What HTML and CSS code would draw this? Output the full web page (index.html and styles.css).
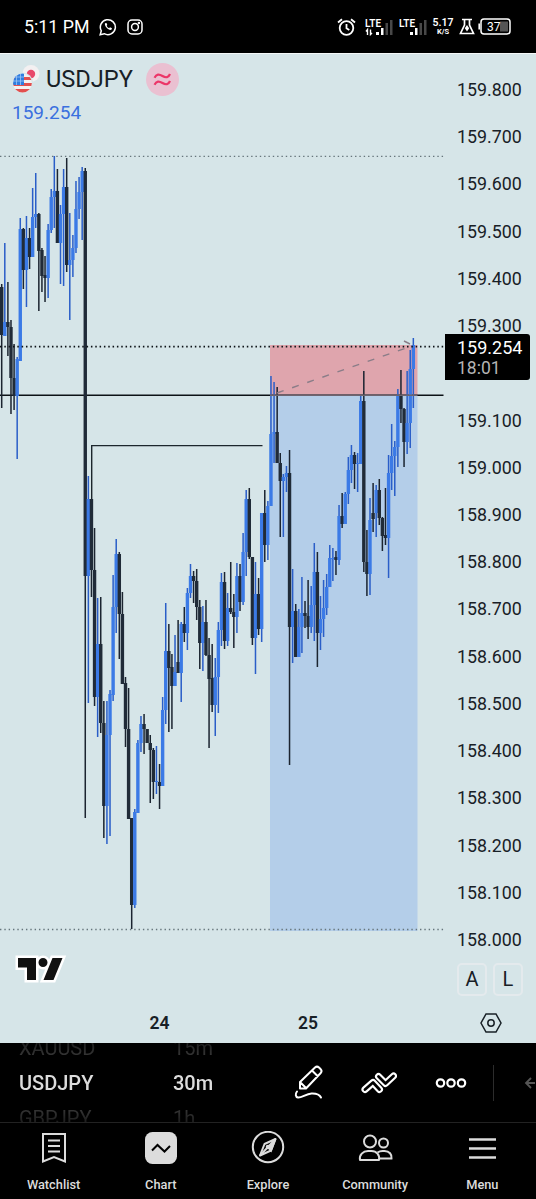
FILE: index.html
```
<!DOCTYPE html>
<html lang="en">
<head>
    <meta charset="UTF-8">
    <meta name="viewport" content="width=device-width, initial-scale=1.0">
    <title>USDJPY 159.254</title>
    <link rel="stylesheet" href="styles.css">
</head>
<body>
    <div class="status-bar">
        <span class="clock">5:11 PM</span>
        <svg class="whatsapp" width="18" height="18" viewBox="0 0 18 18" fill="none" stroke="#fff" stroke-width="1.5">
            <path d="M1.2 16.8l1.1-4A7.5 7.5 0 1 1 5.2 15.700z"/>
            <path d="M6 5.200c-1 2.500 3.600 7.500 6.400 6.600l.6-1.500-2-1-.9 1c-1.200-.5-2-1.400-2.500-2.500l.7-.8-.8-2z" fill="#fff" stroke="none"/>
        </svg>
        <svg class="instagram" width="16" height="16" viewBox="0 0 16 16" fill="none" stroke="#fff" stroke-width="1.5">
            <rect x="1" y="1" width="14" height="14" rx="4"/>
            <circle cx="8" cy="8" r="3.400"/>
            <circle cx="11.900" cy="4.100" r=".5"/>
        </svg>
        <div class="status-right">
            <svg class="alarm" width="19" height="18" viewBox="0 0 19 18" fill="none" stroke="#fff" stroke-width="1.800">
                <circle cx="9.500" cy="10" r="6.800"/>
                <path d="M1 4.500L5 1.200M18 4.500L14 1.200M9.500 6v4.300l2.800 1.700"/>
            </svg>
            <svg class="lte" width="29" height="18" viewBox="0 0 29 18">
                <text x="0" y="8.500">LTE</text>
                <path d="M2.500 17v-5.500l-1.500 2M5.500 11.500v5l1.500-1.500" fill="none" stroke="#fff" stroke-width="1.400"/>
                <path d="M11 14h3v3h-3zM16 10h2.500v7H16z" fill="#fff"/>
                <path d="M20.500 5H23v12h-2.500zM25 2h2.500v15H25z" fill="#484848"/>
            </svg>
            <svg class="lte second" width="29" height="18" viewBox="0 0 29 18">
                <text x="0" y="8.500">LTE</text>
                <path d="M11 14h3v3h-3zM16 10h2.500v7H16z" fill="#fff"/>
                <path d="M20.500 5H23v12h-2.500zM25 2h2.500v15H25z" fill="#484848"/>
            </svg>
            <div class="speed"><b>5.17</b><small>K/S</small></div>
            <svg class="flask" width="16" height="17" viewBox="0 0 16 17" fill="none" stroke="#fff" stroke-width="1.700">
                <path d="M3 1.500h10M5.500 2v5L1.500 15.500h13L10.500 7V2"/>
                <path d="M8 7l2.200 3.300L8 13.500l-2.200-3.200z" fill="#fff" stroke="none"/>
            </svg>
            <svg class="battery" width="33" height="17" viewBox="0 0 33 17">
                <path d="M1.200 5.500v6" stroke="#fff" stroke-width="1.600"/>
                <rect x="3" y="1" width="29" height="15" rx="3" fill="none" stroke="#fff" stroke-width="1.500"/>
                <path d="M22 3.500h8v10h-8z" fill="#555"/>
                <text x="9" y="12.700">37</text>
            </svg>
        </div>
    </div>

    <div class="chart">
        <div class="plot">
            <svg id="candles" width="445" height="951" viewBox="0 54 445 951"></svg>
            <div class="legend">
                <div class="symbol">
                    <svg width="28" height="28" viewBox="0 0 28 28">
                        <circle cx="19" cy="8.500" r="8.500" fill="#f3f0f1"/>
                        <circle cx="19" cy="9" r="4.200" fill="#e8486a"/>
                        <circle cx="10.500" cy="18" r="10.500" fill="#d6e5e8"/>
                        <clipPath id="flag"><circle cx="10.500" cy="18" r="9.400"/></clipPath>
                        <g clip-path="url(#flag)">
                            <path d="M0 8h21v20H0z" fill="#f4f1f1"/>
                            <path d="M0 12h21v3H0zM0 18h21v3H0zM0 24h21v4H0z" fill="#e2504f"/>
                            <path d="M0 8h12v12H0z" fill="#2f7de0"/>
                            <path d="M0 12h12M0 16h12M4.500 8v12M8.500 8v12" stroke="#9cc5f5" stroke-width=".8"/>
                        </g>
                    </svg>
                    <span class="symbol-name">USDJPY</span>
                    <svg class="badge" width="33" height="33" viewBox="0 0 33 33" fill="none" stroke="#ec3568" stroke-width="2.200">
                        <circle cx="16.500" cy="16.500" r="16.500" fill="#eac0d1" stroke="none"/>
                        <path d="M8.500 14.800c2-4 4.500-4 8-1.800s6 1.500 7.500-2M8.500 21.800c2-4 4.500-4 8-1.800s6 1.500 7.500-2"/>
                    </svg>
                </div>
                <div class="last-price">159.254</div>
            </div>
            <svg class="tv-logo" width="52" height="28" viewBox="0 0 52 28">
                <path d="M3 3h18v22H12V12.500H3zM28 3a4.500 4.500 0 1 1 0 9 4.500 4.500 0 0 1 0-9zM37.500 3H47.500L38.500 25H28.500z" fill="#111" stroke="#fff" stroke-width="5" paint-order="stroke"/>
            </svg>
        </div>
        <div class="price-axis">
            <div id="prices"></div>
            <div class="scale-buttons"><span>A</span><span>L</span></div>
            <div class="price-tag"><span>159.254</span><span class="countdown">18:01</span></div>
        </div>
        <div class="time-axis">
            <span>24</span>
            <span>25</span>
            <svg width="22" height="20" viewBox="0 0 22 20" fill="none" stroke="#182026" stroke-width="1.500">
                <path d="M6 1h10l5 9-5 9H6l-5-9z"/>
                <circle cx="11" cy="10" r="3.200"/>
            </svg>
        </div>
    </div>

    <div class="toolbar">
        <div class="wheel symbols"><span>XAUUSD</span><span class="current">USDJPY</span><span>GBPJPY</span></div>
        <div class="wheel intervals"><span>15m</span><span class="current">30m</span><span>1h</span></div>
        <svg class="draw" width="30" height="36" viewBox="0 0 30 36" fill="none" stroke="#fff" stroke-width="2" stroke-linejoin="round">
            <path d="M6 23.500v-6.500L21 2.500q2-1.800 4 0l1.500 1.500q2 2 .2 4L12 23.500zM6 17l6.500 6.500M18 5.500l6 6"/>
            <path d="M3 26.500c-2 2.500-1.500 5.500 1 6 3.500.5 8-3.700 13.500-4 4.500-.2 8 1 9.500 4" stroke-linecap="round"/>
        </svg>
        <svg class="indicators" width="36" height="24" viewBox="0 0 36 24" fill="none" stroke-linecap="round" stroke-linejoin="round">
            <path d="M4 18.500L12 11.500l6.500 7M17.500 5.500l7 7L32.500 5" stroke="#fff" stroke-width="7"/>
            <path d="M4 18.500L12 11.500l6.500 7M17.500 5.500l7 7L32.500 5" stroke="#000" stroke-width="2.800"/>
        </svg>
        <svg class="more" width="32" height="12" viewBox="0 0 32 12" fill="none" stroke="#fff" stroke-width="2.200">
            <circle cx="5.500" cy="6" r="3.700"/><circle cx="16" cy="6" r="3.700"/><circle cx="26.500" cy="6" r="3.700"/>
        </svg>
        <i class="divider"></i>
        <svg class="back" width="11" height="12" viewBox="0 0 11 12" fill="none" stroke="#555" stroke-width="1.800">
            <path d="M7 1L2 6l5 5M2 6h9"/>
        </svg>
    </div>

    <div class="nav">
        <div class="nav-item">
            <svg width="34" height="34" viewBox="0 0 34 34" fill="none" stroke="#dcdcdc" stroke-width="2">
                <path d="M6 3h22v27.500l-11-4.500-11 4.500zM11 9.500h12M11 15h12M11 20.500h12"/>
            </svg>
            <span>Watchlist</span>
        </div>
        <div class="nav-item">
            <svg width="34" height="34" viewBox="0 0 34 34" fill="none">
                <rect x="1" y="1" width="32" height="32" rx="7.500" fill="#dcdcdc"/>
                <path d="M8 19.500l5.500-5.500 7 6.500 5.500-5.500" stroke="#000" stroke-width="2"/>
            </svg>
            <span>Chart</span>
        </div>
        <div class="nav-item">
            <svg width="34" height="34" viewBox="0 0 34 34" fill="none" stroke="#dcdcdc" stroke-width="2">
                <circle cx="17" cy="16" r="15.200"/>
                <path d="M24.500 8L13.500 13 9 24.500l11-5z" stroke-linejoin="round"/>
                <path d="M24.500 8L17 16l3 3.500z" fill="#dcdcdc"/>
                <path d="M9 24.500L17 16"/>
                <circle cx="17" cy="16" r="1.300"/>
            </svg>
            <span>Explore</span>
        </div>
        <div class="nav-item">
            <svg width="36" height="34" viewBox="0 0 36 34" fill="none" stroke="#dcdcdc" stroke-width="2">
                <circle cx="13" cy="10.500" r="6"/>
                <circle cx="26.500" cy="12" r="4.500"/>
                <path d="M3 29c-1-5 3-9 8-9h3.500c5 0 8.500 4 7.500 9z" stroke-linejoin="round"/>
                <path d="M20.500 21.500c1.500-1 2.500-1.500 5-1.500h2c5 0 7.500 3.500 7 7.500H22"/>
            </svg>
            <span>Community</span>
        </div>
        <div class="nav-item">
            <svg width="34" height="34" viewBox="0 0 34 34" stroke="#dcdcdc" stroke-width="2.500">
                <path d="M4 8.500h27M4 17.500h27M4 26.500h27"/>
            </svg>
            <span>Menu</span>
        </div>
    </div>

    <script>
        // direction, high, low, body top, body bottom
        const candles = [
            "d 284 408 287 335", "u 243 336 322 336", "d 282 356 322 327", "d 320 414 327 378", "d 344 410 378 396",
            "u 357 459 359 396", "u 218 361 229 361", "d 228 289 229 270", "u 216 307 238 270", "d 228 269 238 257",
            "u 188 257 217 257", "u 173 228 214 217", "d 213 311 214 251", "d 248 292 250 276", "d 256 302 275 278",
            "u 224 298 230 278", "u 189 233 197 230", "u 156 228 191 197", "d 169 243 191 243", "u 205 284 214 243",
            "u 169 286 187 214", "d 158 272 187 265", "u 213 320 260 265", "u 235 277 248 260", "u 181 253 209 248",
            "u 177 219 192 209", "u 167 240 171 192", "d 168 818 171 576", "u 476 703 499 576", "d 499 597 499 570",
            "d 528 706 570 697", "u 598 737 644 697", "d 597 733 644 723", "d 701 838 723 806", "u 701 844 735 806",
            "u 690 836 694 735", "u 575 701 607 695", "u 539 633 554 607", "d 552 659 554 614", "d 592 684 614 684",
            "d 677 747 683 729", "d 688 819 729 819", "d 818 929 818 905", "u 809 908 812 905", "u 740 813 743 813",
            "u 716 752 724 743", "d 714 754 724 729", "d 729 743 729 743", "d 735 803 743 750", "d 748 799 750 782",
            "u 746 794 781 782", "d 764 809 782 786", "u 697 786 710 786", "u 603 724 651 710", "d 624 732 651 668",
            "d 654 729 667 686", "u 635 686 672 686", "d 620 673 662 673", "u 622 702 624 673", "d 607 642 624 633",
            "u 588 650 593 633", "u 564 598 576 593", "d 571 603 576 581", "d 569 620 581 607", "d 600 669 607 643",
            "u 606 671 622 643", "d 600 656 622 655", "d 638 748 655 679", "d 644 712 678 705", "u 658 736 677 705",
            "u 622 713 630 677", "u 573 646 582 630", "d 572 649 582 641", "u 593 646 608 641", "d 562 614 608 612",
            "d 594 648 612 617", "u 563 633 576 617", "d 564 611 576 602", "u 533 605 552 602", "u 490 576 499 552",
            "d 488 559 499 557", "d 557 645 557 638", "u 562 674 594 638", "d 578 635 594 629", "u 513 642 513 629",
            "d 490 562 513 545", "u 501 560 506 545", "u 376 506 434 506", "u 382 463 432 434", "d 387 463 432 463",
            "d 453 537 463 481", "u 474 537 477 481", "u 466 492 473 477", "d 450 765 473 627", "u 569 663 611 627",
            "d 604 657 611 657", "u 609 657 627 657", "u 577 653 613 627", "d 601 628 613 616", "d 580 639 616 627",
            "u 586 633 605 627", "u 543 641 572 605", "d 552 667 572 633", "u 596 650 619 633", "u 580 637 608 619",
            "u 574 615 587 608", "u 545 587 558 587", "u 548 581 558 559", "d 551 575 557 560", "u 505 565 516 560",
            "d 493 528 516 524", "u 492 524 494 524", "u 457 504 470 494", "u 445 483 455 470", "d 452 489 455 464",
            "u 453 492 463 464", "u 396 464 401 464", "d 371 572 401 562", "d 530 596 562 574", "u 498 595 520 574",
            "d 483 532 513 519", "u 485 537 490 513", "d 479 525 490 518", "d 517 551 518 536", "d 488 545 535 538",
            "u 455 578 473 538", "u 424 490 456 473", "u 441 496 447 456", "u 389 467 395 447", "d 370 423 396 409",
            "d 408 467 409 442", "u 371 454 423 442", "u 350 448 369 423", "u 338 408 345 369"
        ];

        let shapes = `
            <rect class="target" x="270" y="395" width="147.500" height="536"/>
            <rect class="stop" x="270" y="345" width="147.500" height="50"/>
            <path class="entry" d="M0 395.300H443.500"/>
            <path class="range" d="M0 156.400H445M0 929.500H445"/>
            <path class="structure" d="M91.700 499V445.600H262.500"/>`;

        candles.forEach((row, i) => {
            const [dir, high, low, top, bottom] = row.split(" ");
            const x = 1.700 + i * 3.095;
            shapes += `<rect class="wick-${dir}" x="${x - 0.75}" y="${high}" width="1.500" height="${low - high}"/>`;
            shapes += `<rect class="body-${dir}" x="${x - 1.700}" y="${top}" width="3.400" height="${bottom - top}"/>`;
        });

        shapes += `
            <path class="path-line" d="M277 393L412 346M404 341l6 3"/>
            <path class="veil" d="M270 395.300H417.500"/>
            <path class="last" d="M0 346.600H445"/>`;
        document.getElementById("candles").innerHTML = shapes;

        for (let p = 1598; p >= 1580; p--) {
            const label = document.createElement("span");
            // 159.200 is covered by the last price tag
            label.textContent = p === 1592 ? "" : (p / 10).toFixed(3);
            document.getElementById("prices").appendChild(label);
        }
    </script>
</body>
</html>
```
FILE: styles.css
```
* {
    box-sizing: border-box;
}
body {
    margin: 0;
    width: 536px;
    height: 1199px;
    overflow: hidden;
    background: #000;
    color: #182026;
    font-family: Roboto, sans-serif;
}
svg {
    display: block;
    flex: none;
}
.status-bar {
    display: flex;
    align-items: center;
    height: 54px;
    padding: 0 25px 0 24px;
    border-bottom: 1px solid #f4f8f8;
    color: #fff;
}
.clock {
    width: 75px;
    font-size: 17.800px;
}
.instagram {
    margin-left: 10px;
}
.status-right {
    display: flex;
    align-items: center;
    margin-left: auto;
}
.lte {
    margin-left: 9px;
}
.lte.second {
    margin-left: 5px;
}
.lte text {
    fill: #fff;
    font-size: 10px;
    font-weight: 600;
}
.speed {
    display: flex;
    flex-direction: column;
    align-items: center;
    width: 22px;
    margin: 1px 5px 0 4px;
}
.speed b {
    font-size: 10.500px;
    font-weight: 600;
    line-height: 10px;
}
.speed small {
    font-size: 7.500px;
    font-weight: 700;
    line-height: 8px;
}
.battery {
    margin-left: 3px;
}
.battery text {
    fill: #fff;
    font-size: 12px;
}

/* chart */
.chart {
    display: grid;
    grid-template-columns: 445px 91px;
    grid-template-rows: 951px 38px;
    background: #d6e5e8;
}
.plot, .price-axis {
    position: relative;
}
.legend {
    position: absolute;
    top: 8.500px;
    left: 12px;
}
.symbol {
    display: flex;
    align-items: center;
    height: 33px;
}
.symbol-name {
    margin-left: 6px;
    font-size: 23.600px;
}
.badge {
    margin-left: 13px;
}
.last-price {
    margin-top: 5px;
    font-size: 19px;
    line-height: 24px;
    color: #3a70df;
}
.tv-logo {
    position: absolute;
    left: 15px;
    top: 901px;
}
.target { fill: #b4cee9; }
.stop { fill: #dfa5ad; }
.wick-u { fill: #2a5ec8; }
.body-u { fill: #3b7ae6; }
.wick-d { fill: #1b2430; }
.body-d { fill: #202b38; }
.entry, .range, .structure, .last, .path-line, .veil {
    fill: none;
    stroke: #0c1216;
    stroke-width: 1.400;
}
.structure {
    stroke: #1c262c;
}
.range {
    stroke: #66757b;
    stroke-dasharray: 1.400 2.930;
}
.last {
    stroke-dasharray: 1.500 2.830;
    stroke-width: 1.600;
}
.path-line {
    stroke: #8a7d88;
    stroke-dasharray: 7 9;
}
.veil {
    stroke: #6d6570;
}
.price-axis {
    padding-top: 12px;
}
#prices span {
    display: block;
    height: 47.220px;
    padding-left: 12px;
    line-height: 48px;
    font-size: 17.800px;
}
.scale-buttons {
    display: flex;
    gap: 6px;
    margin-left: 12px;
}
.scale-buttons span {
    width: 30px;
    height: 33px;
    border: 2px solid #e4eaed;
    border-radius: 5px;
    font-size: 20px;
    line-height: 29px;
    text-align: center;
}
.price-tag {
    position: absolute;
    top: 280px;
    left: 0;
    width: 85px;
    height: 46px;
    padding: 3px 0 0 12px;
    border-radius: 0 3px 3px 0;
    background: #000;
    color: #fff;
    font-size: 18px;
    line-height: 21px;
}
.price-tag span {
    display: block;
}
.price-tag .countdown {
    color: #b4b4b4;
    font-size: 17.500px;
}
.time-axis {
    grid-column: 1 / 3;
    display: grid;
    grid-template-columns: 85px 149px 148px 98px 22px;
    align-items: center;
    padding-bottom: 2px;
    font-size: 17.500px;
    font-weight: 600;
    text-align: center;
}
.time-axis span:first-child {
    grid-column: 2;
}
.time-axis svg {
    grid-column: 5;
}

/* toolbar */
.toolbar {
    display: flex;
    align-items: center;
    height: 80px;
    padding-left: 19px;
    border-bottom: 1px solid #222;
}
.wheel {
    display: flex;
    flex-direction: column;
    justify-content: center;
    height: 79px;
    padding-top: 2px;
    overflow: hidden;
    color: #4a4a4a;
    font-size: 20px;
    line-height: 35px;
    mask-image: linear-gradient(transparent -20%, #000 30%, #000 70%, transparent 120%);
}
.wheel .current {
    color: #dcdcdc;
    font-weight: 500;
}
.symbols {
    width: 154px;
}
.intervals {
    width: 121px;
}
.indicators {
    margin-left: 37px;
}
.more {
    margin-left: 38px;
}
.divider {
    width: 1px;
    height: 36px;
    margin-left: 26px;
    background: #2c2c2c;
}
.back {
    margin-left: 30px;
}

/* bottom navigation */
.nav {
    display: grid;
    grid-template-columns: repeat(5, 107.200px);
    height: 76px;
}
.nav-item {
    display: flex;
    flex-direction: column;
    align-items: center;
    padding-top: 8px;
    color: #dcdcdc;
    font-size: 12.800px;
    font-weight: 500;
    line-height: 16px;
}
.nav-item span {
    margin-top: 12px;
}
```
